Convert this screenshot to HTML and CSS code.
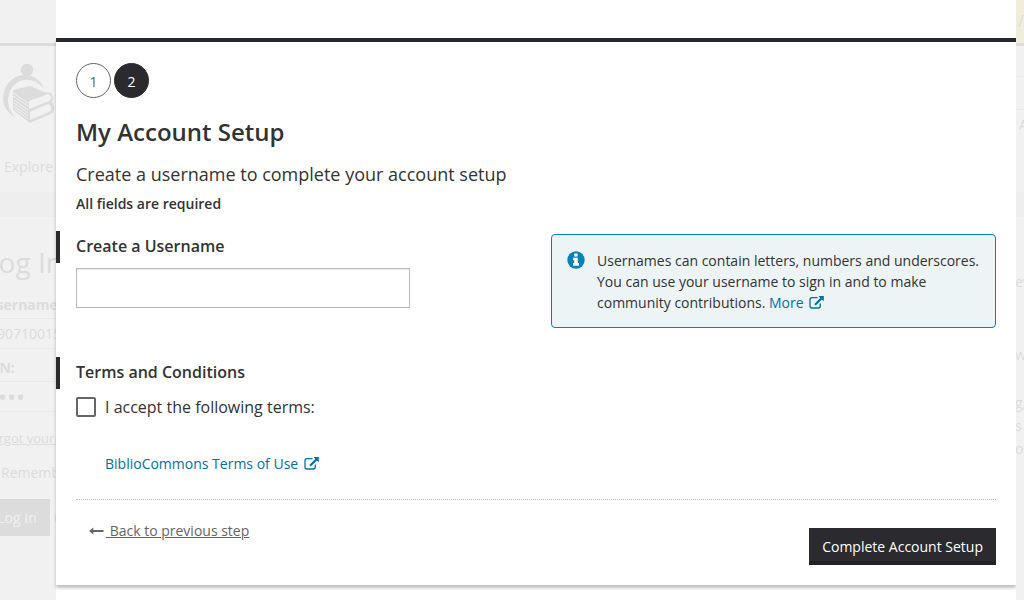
FILE: index.html
```html
<!DOCTYPE html>
<html lang="en">

<head>
    <meta charset="UTF-8">
    <meta name="viewport" content="width=device-width, initial-scale=1.0">
    <title>My Account Setup</title>
    <link rel="stylesheet" href="styles.css">
</head>

<body>
    <!-- faded page on the left of the dialog -->
    <aside class="page page-left">
        <div class="page-top"></div>
        <div class="page-nav">
            <svg class="logo" viewBox="0 0 54 62" width="54" height="62">
                <circle cx="27" cy="7" r="6.3" fill="#dcdcdc" />
                <path d="M16 55 C5 49 1 39 4 29 C9 8 38 5 45 28 C37 13 17 13 10 28 C6 38 8 47 16 55Z" fill="#dcdcdc" />
                <path d="M13 27 L30 23 L44 29 L51 30 Q55 34 52 39 Q56 44 53 50 L30 60 L13 47Z" fill="#dcdcdc" />
                <path d="M29 38 L48 31 Q52 32 51 36 L49 38 L29 46 Z M30 49 L48 41 Q52 42 51 48 L30 57Z" fill="#f1f1f1" />
                <path d="M13 30 L28 40 M13 33 L28 43 M14 37 L28 47 M14 40 L28 50 M14 43 L28 53 M15 46 L28 56" stroke="#f1f1f1" />
            </svg>
            <a class="explore" href="#">Explore</a>
        </div>
        <div class="page-band"></div>
        <div class="login">
            <h2>Log In</h2>
            <label for="login-name">Username</label>
            <input id="login-name" type="text" value="29071001590" readonly>
            <label for="login-pin">PIN:</label>
            <input id="login-pin" type="password" value="1234" readonly>
            <a class="forgot" href="#">Forgot your PIN?</a>
            <p class="remember">Remember me</p>
            <div class="login-row">
                <button type="button">Log In</button>
                <span>Cancel</span>
            </div>
        </div>
    </aside>

    <main>
        <form class="dialog">
            <div class="steps">
                <span class="step">1</span>
                <span class="step active">2</span>
            </div>
            <h1>My Account Setup</h1>
            <p class="intro">Create a username to complete your account setup</p>
            <p class="required">All fields are required</p>

            <div class="username">
                <div class="field">
                    <h2 class="section-title"><label for="username">Create a Username</label></h2>
                    <input id="username" type="text">
                </div>
                <div class="info">
                    <svg width="18" height="18" viewBox="0 0 18 18">
                        <circle cx="9" cy="9" r="8.7" fill="#0582b8" />
                        <path d="M7.2 2.6H10.6V5.6H7.2Z M6 6.8H10.8V12.1H12V14.7H6V12.1H7.2V9.2H6Z" fill="#fff" />
                    </svg>
                    <p>Usernames can contain letters, numbers and underscores. You can use your username to sign in and to make community contributions.
                        <a class="external" href="#">More
                            <svg width="15" height="13" viewBox="0 0 15 13">
                                <path d="M8.5 1.7H3Q1 1.7 1 3.7V10Q1 12 3 12H9.3Q11.3 12 11.3 10V7.5" fill="none" stroke="currentColor" stroke-width="1.3" />
                                <path d="M9.4 0H14.8V5.3L12.9 3.5L6.7 9.4L5.3 8L11.3 1.9Z" fill="currentColor" />
                            </svg></a>
                    </p>
                </div>
            </div>

            <h2 class="section-title">Terms and Conditions</h2>
            <div class="accept">
                <input id="accept" type="checkbox">
                <label for="accept">I accept the following terms:</label>
            </div>
            <a class="external terms-link" href="#">BiblioCommons Terms of Use
                <svg width="15" height="13" viewBox="0 0 15 13">
                    <path d="M8.5 1.7H3Q1 1.7 1 3.7V10Q1 12 3 12H9.3Q11.3 12 11.3 10V7.5" fill="none" stroke="currentColor" stroke-width="1.3" />
                    <path d="M9.4 0H14.8V5.3L12.9 3.5L6.7 9.4L5.3 8L11.3 1.9Z" fill="currentColor" />
                </svg></a>

            <div class="actions">
                <a class="back" href="#">
                    <svg width="15" height="8" viewBox="0 0 15 8">
                        <path d="M0 4L4.3 0.5V3H14.5V5H4.3V7.5Z" fill="currentColor" />
                    </svg><span>&nbsp;Back to previous step</span></a>
                <button class="submit" type="submit">Complete Account Setup</button>
            </div>
        </form>
    </main>

    <!-- faded page on the right of the dialog -->
    <aside class="page page-right">
        <div class="page-top">/</div>
        <div class="page-nav">
            <div class="nav-line"></div>
            <div class="nav-line"></div>
            <span>A</span>
        </div>
        <div class="page-band"></div>
        <div class="notes">
            <p>ev</p>
            <p>w</p>
            <p class="tight">g,<br>s<br>ou</p>
        </div>
    </aside>
</body>

</html>
```
FILE: styles.css
```css
* {
    box-sizing: border-box;
}

body {
    display: grid;
    grid-template-columns: 56px 1fr 8px;
    min-height: 100vh;
    margin: 0;
    background: #fff;
    color: #333;
    font-family: "Open Sans", sans-serif;
    font-size: 14px;
    line-height: 20px;
}

h1,
h2,
p {
    margin: 0;
}

input,
button {
    font-family: inherit;
    font-size: 14px;
}

/* faded page */
.page {
    overflow: hidden;
    background: #f1f1f1;
    color: #dcdcdc;
    white-space: nowrap;
}

.page a {
    color: #dcdcdc;
}

.page-top {
    height: 46px;
    border-bottom: 3px solid #dcdcdc;
}

.page-nav {
    height: 146px;
}

.page-left .page-nav {
    padding-top: 17px;
}

.page-band {
    height: 25px;
    background: #eee;
}

.logo {
    display: block;
}

.explore {
    display: block;
    margin: 32px 0 0 4px;
    text-decoration: none;
}

.login {
    width: 200px;
    margin-left: -16px;
}

.login h2 {
    padding: 27px 0 22px;
    font-size: 28px;
    line-height: 36px;
    font-weight: 400;
}

.login label {
    display: block;
    padding-left: 2px;
    height: 16px;
    line-height: 6px;
    font-weight: 700;
}

.login label + input {
    margin-bottom: 16px;
}

.login input {
    display: block;
    width: 100%;
    height: 31px;
    padding: 0 4px;
    border: 1px solid #eaeaea;
    background: transparent;
    color: #dcdcdc;
}

.login input[type="password"] {
    font-size: 24px;
}

.forgot {
    display: block;
    font-size: 13px;
    line-height: 20px;
}

.remember {
    padding: 15px 0 16px 17px;
}

.login-row {
    display: flex;
    align-items: center;
    gap: 4px;
}

.login-row button {
    width: 66px;
    height: 37px;
    padding: 0 13px;
    border: none;
    background: #dcdcdc;
    color: #f1f1f1;
}

.page-right .page-top {
    padding: 11px 0 0 2px;
    background: #f0edda;
    font-size: 16px;
}

.nav-line {
    height: 31px;
    border-bottom: 1px solid #eaeaea;
}

.nav-line + .nav-line {
    height: 33px;
}

.page-right span {
    display: block;
    padding: 5px 0 0 3px;
}

.notes {
    padding-top: 55px;
}

.notes p {
    margin: 0 0 53px -1px;
}

.notes .tight {
    margin-top: -27px;
    line-height: 23px;
}

/* dialog */
main {
    padding: 38px 0 15px;
}

.dialog {
    padding: 21px 20px 20px;
    border-top: 4px solid #25282d;
    background: #fff;
    box-shadow: 0 3px 3px rgba(0, 0, 0, 0.25);
}

.steps {
    display: flex;
    gap: 3px;
}

.step {
    width: 35px;
    height: 35px;
    border: 1px solid #666;
    border-radius: 50%;
    color: #666;
    line-height: 36px;
    text-align: center;
}

.step.active {
    border-color: #2a2a2f;
    background: #2a2a2f;
    color: #fff;
}

h1 {
    margin-top: 17px;
    font-size: 24px;
    line-height: 34px;
    font-weight: 600;
}

.intro {
    margin-top: 13px;
    font-size: 18px;
    line-height: 24px;
}

.required {
    margin-top: 8px;
    font-weight: 600;
}

.username {
    display: flex;
    justify-content: space-between;
    margin: 17px 0 29px;
}

.section-title {
    margin-left: -20px;
    padding: 0 0 2px 16px;
    border-left: 4px solid #2a2a2f;
    font-size: 16px;
    line-height: 30px;
    font-weight: 600;
}

.field input {
    display: block;
    width: 334px;
    height: 40px;
    margin-top: 5px;
    padding: 0 8px;
    border: 1px solid #bbb;
    border-radius: 0;
    box-shadow: inset 0 1px 1px rgba(0, 0, 0, 0.08);
}

.info {
    display: flex;
    gap: 12px;
    width: 445px;
    margin-top: 3px;
    padding: 15px 15px 14px;
    border: 1px solid #0582b8;
    border-radius: 4px;
    background: #ecf4f6;
    line-height: 21px;
}

.info > svg {
    flex: none;
    margin-top: 1px;
}

.external {
    color: #0071a0;
    text-decoration: none;
}

.external svg {
    margin-left: 2px;
    vertical-align: -1px;
}

.accept {
    display: flex;
    align-items: center;
    gap: 9px;
    margin-top: 7px;
    font-size: 16px;
    line-height: 22px;
}

.accept input {
    appearance: none;
    width: 20px;
    height: 20px;
    margin: 0;
    border: 2px solid #666;
    border-radius: 2px;
    background: #fff;
}

.terms-link {
    display: block;
    margin: 36px 0 0 29px;
}

.actions {
    display: flex;
    justify-content: space-between;
    align-items: flex-start;
    margin-top: 25px;
    padding-top: 28px;
    border-top: 1px dotted #bbb;
}

.back {
    display: flex;
    align-items: center;
    gap: 2px;
    margin: -7px 0 0 13px;
    color: #666;
    text-decoration: none;
}

.back span {
    text-decoration: underline;
}

.submit {
    height: 37px;
    padding: 0 13px;
    border: none;
    background: #2a2a2f;
    box-shadow: inset 0 -4px #222226;
    color: #fff;
}
```
